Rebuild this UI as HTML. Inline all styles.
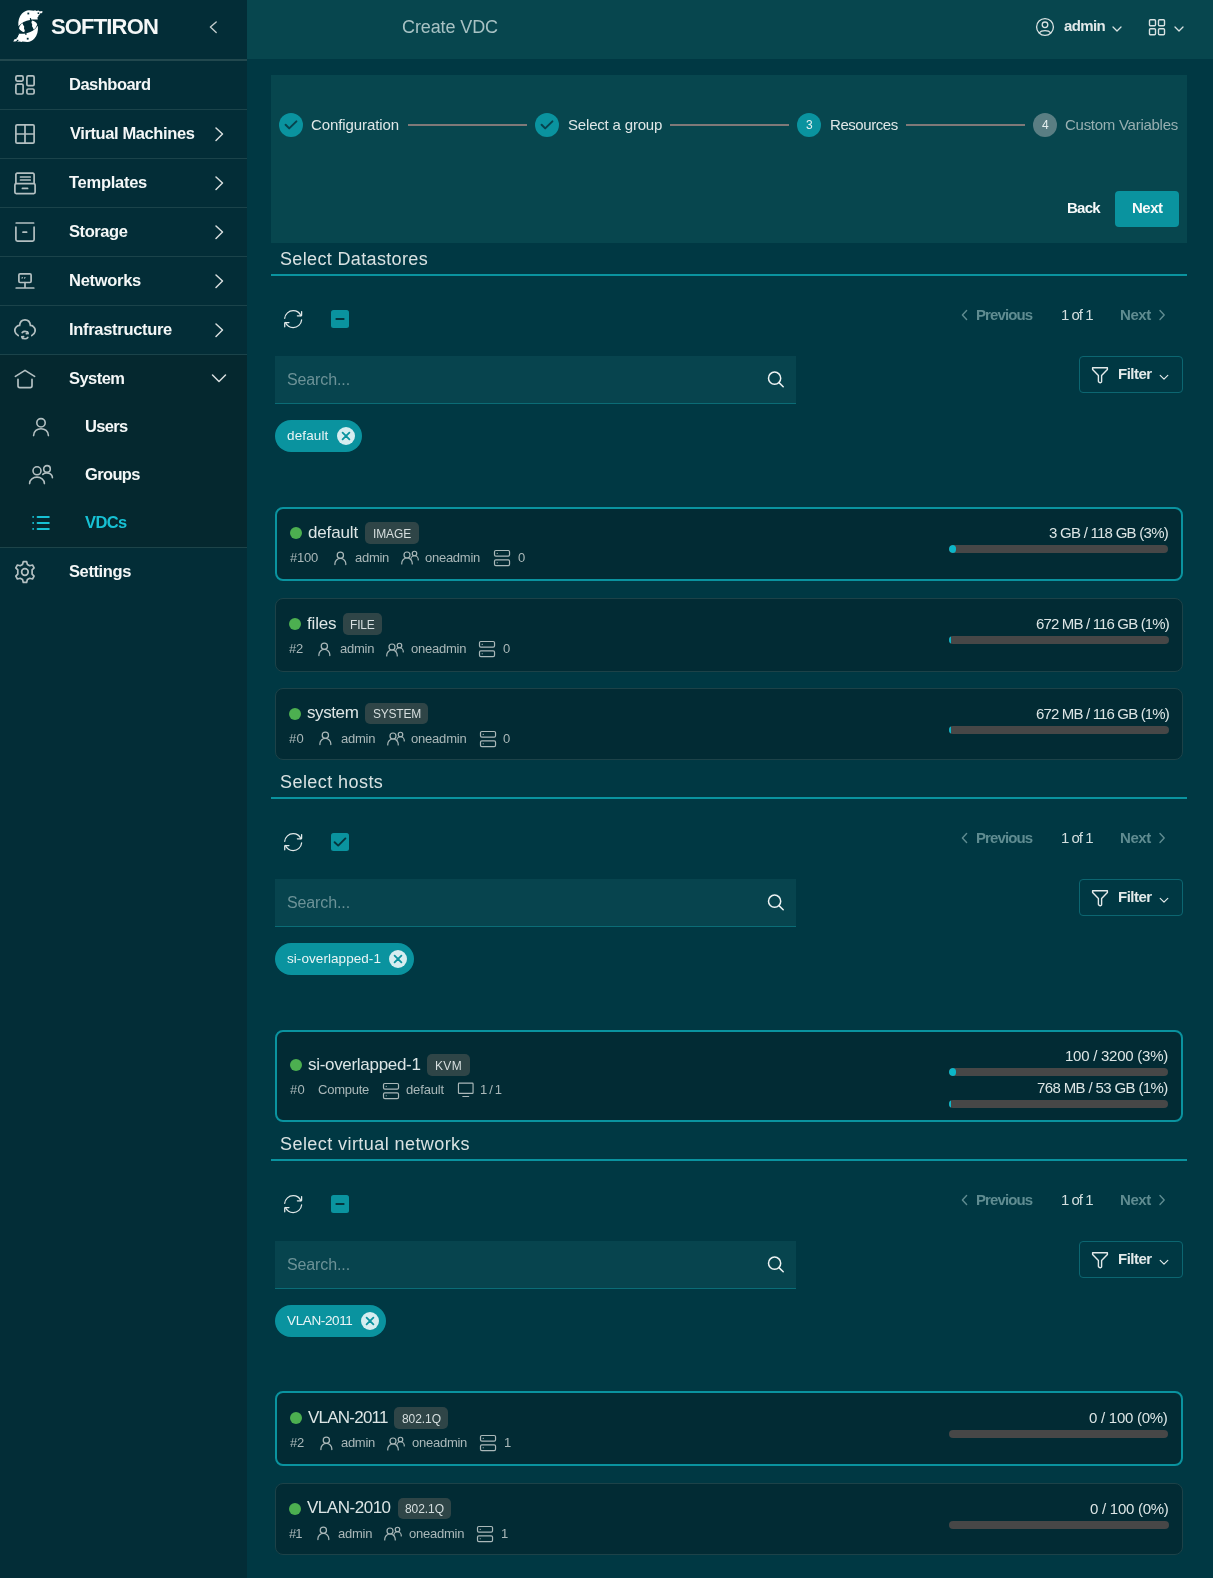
<!DOCTYPE html>
<html><head><meta charset="utf-8"><title>Create VDC</title>
<style>
html,body{margin:0;padding:0;}
body{width:1213px;height:1578px;overflow:hidden;position:relative;background:#003843;font-family:"Liberation Sans", sans-serif;}
svg{display:block;}
</style></head><body>
<div style="position:absolute;left:0px;top:0px;width:247px;height:1578px;background:#032d37;"></div>
<div style="position:absolute;left:247px;top:0px;width:966px;height:59px;background:#07464e;"></div>
<div style="position:absolute;left:0px;top:59px;width:247px;height:2px;background:#22484e;"></div>
<div style="position:absolute;left:0px;top:109px;width:247px;height:1px;background:#1b434a;"></div>
<div style="position:absolute;left:0px;top:158px;width:247px;height:1px;background:#1b434a;"></div>
<div style="position:absolute;left:0px;top:207px;width:247px;height:1px;background:#1b434a;"></div>
<div style="position:absolute;left:0px;top:256px;width:247px;height:1px;background:#1b434a;"></div>
<div style="position:absolute;left:0px;top:305px;width:247px;height:1px;background:#1b434a;"></div>
<div style="position:absolute;left:0px;top:354px;width:247px;height:1px;background:#1b434a;"></div>
<div style="position:absolute;left:0px;top:355px;width:247px;height:192px;background:#05282f;"></div>
<div style="position:absolute;left:0px;top:547px;width:247px;height:1px;background:#1d4449;"></div>
<div style="position:absolute;left:271px;top:75px;width:916px;height:168px;background:#07464e;"></div>
<svg style="position:absolute;left:8px;top:6px;" width="40" height="40" viewBox="8 6 40 40" fill="none">
<path d="M18.4 26.3 C17.9 21 19.2 16.4 22 13.6 C24 11.6 26.4 10.4 29 10.3 L34 10.7 L35 10.3 L36.6 10.9 L38.4 10.5 L40 11.4 L41.2 11 L42.9 11.7 L41.6 13.3 L40.2 13.2 L39.4 15 L38.6 15.2 L38.2 16.8 L37.4 17.6 L37.8 19.4 C35 19.4 32 19.4 31.2 19.6 L31 18 L29.8 18.2 L30 19.9 C25.6 20.6 21.2 22.6 18.4 26.3 Z" fill="#fff"/>
<path d="M37.9 25.8 C38.4 31 37.2 35.6 34.4 38.4 C32.4 40.4 30 41.8 27.4 42 L22.4 41.6 L21.4 42 L19.8 41.4 L18 41.8 L16.4 41 L15.2 41.4 L13.2 41.6 L14.8 39 L16.2 39.2 L17 37.4 L17.8 37.2 L18.2 35.6 L19 34.8 L18.6 33.8 C21.4 33.8 24.4 33.6 25.2 33.4 L25.4 35 L26.6 34.8 L26.4 33.2 C30.8 32.4 35.2 29.8 37.9 25.8 Z" fill="#fff"/>
<path d="M19 28.2 C19.6 25.8 21 24 22.5 23.2 L23.2 25 L24.2 26.6 L24 28.4 L24.8 30.4 L24.2 32.2 C22 31.6 20 30.4 19 28.2 Z" fill="#fff"/>
<path d="M37.2 24.2 C36.6 26.6 35.2 28.6 33.6 29.6 L32.8 27.6 L32 26.2 L32.2 24.4 L31.4 22.4 L32 20.6 C34.2 21 36.2 22.2 37.2 24.2 Z" fill="#fff"/>
<rect x="27.4" y="12.6" width="1.8" height="1.8" fill="#032d37"/><rect x="37.6" y="12.4" width="1.6" height="1.6" fill="#032d37"/>
<rect x="26.8" y="37.8" width="1.8" height="1.8" fill="#032d37"/><rect x="16.8" y="39.8" width="1.6" height="1.6" fill="#032d37"/>
</svg>
<div style="position:absolute;left:50.50px;top:16.38px;font-size:22px;line-height:22px;font-weight:700;color:#f4f7f7;letter-spacing:-0.834px;white-space:pre;will-change:transform;">SOFTIRON</div>
<svg style="position:absolute;left:205px;top:18px;" width="16" height="18" viewBox="0 0 16 18" fill="none"><path d="M11.2 4 L5.4 9 L11.2 14.4" stroke="#c3cccc" stroke-width="1.4" stroke-linecap="round" stroke-linejoin="round"/></svg>
<div style="position:absolute;left:69.30px;top:76.23px;font-size:16.5px;line-height:16.5px;font-weight:700;color:#f4f7f7;letter-spacing:-0.510px;white-space:pre;will-change:transform;">Dashboard</div>
<div style="position:absolute;left:69.50px;top:125.23px;font-size:16.5px;line-height:16.5px;font-weight:700;color:#f4f7f7;letter-spacing:-0.396px;white-space:pre;will-change:transform;">Virtual Machines</div>
<div style="position:absolute;left:69.30px;top:174.23px;font-size:16.5px;line-height:16.5px;font-weight:700;color:#f4f7f7;letter-spacing:-0.266px;white-space:pre;will-change:transform;">Templates</div>
<div style="position:absolute;left:69.20px;top:223.13px;font-size:16.5px;line-height:16.5px;font-weight:700;color:#f4f7f7;letter-spacing:-0.420px;white-space:pre;will-change:transform;">Storage</div>
<div style="position:absolute;left:69.20px;top:271.83px;font-size:16.5px;line-height:16.5px;font-weight:700;color:#f4f7f7;letter-spacing:-0.285px;white-space:pre;will-change:transform;">Networks</div>
<div style="position:absolute;left:69.20px;top:321.03px;font-size:16.5px;line-height:16.5px;font-weight:700;color:#f4f7f7;letter-spacing:-0.306px;white-space:pre;will-change:transform;">Infrastructure</div>
<div style="position:absolute;left:69.20px;top:369.73px;font-size:16.5px;line-height:16.5px;font-weight:700;color:#f4f7f7;letter-spacing:-0.534px;white-space:pre;will-change:transform;">System</div>
<div style="position:absolute;left:85.30px;top:417.73px;font-size:16.5px;line-height:16.5px;font-weight:700;color:#f4f7f7;letter-spacing:-0.675px;white-space:pre;will-change:transform;">Users</div>
<div style="position:absolute;left:85.30px;top:466.13px;font-size:16.5px;line-height:16.5px;font-weight:700;color:#f4f7f7;letter-spacing:-0.645px;white-space:pre;will-change:transform;">Groups</div>
<div style="position:absolute;left:85.30px;top:514.03px;font-size:16.5px;line-height:16.5px;font-weight:700;color:#17c1d4;letter-spacing:-0.629px;white-space:pre;will-change:transform;">VDCs</div>
<div style="position:absolute;left:69.20px;top:563.03px;font-size:16.5px;line-height:16.5px;font-weight:700;color:#f4f7f7;letter-spacing:-0.387px;white-space:pre;will-change:transform;">Settings</div>
<svg style="position:absolute;left:211px;top:126px;" width="16" height="16" viewBox="0 0 16 16" fill="none"><path d="M5 2 L11.5 8 L5 14.5" stroke="#d8dede" stroke-width="1.5" stroke-linecap="round" stroke-linejoin="round"/></svg>
<svg style="position:absolute;left:211px;top:175px;" width="16" height="16" viewBox="0 0 16 16" fill="none"><path d="M5 2 L11.5 8 L5 14.5" stroke="#d8dede" stroke-width="1.5" stroke-linecap="round" stroke-linejoin="round"/></svg>
<svg style="position:absolute;left:211px;top:224px;" width="16" height="16" viewBox="0 0 16 16" fill="none"><path d="M5 2 L11.5 8 L5 14.5" stroke="#d8dede" stroke-width="1.5" stroke-linecap="round" stroke-linejoin="round"/></svg>
<svg style="position:absolute;left:211px;top:273px;" width="16" height="16" viewBox="0 0 16 16" fill="none"><path d="M5 2 L11.5 8 L5 14.5" stroke="#d8dede" stroke-width="1.5" stroke-linecap="round" stroke-linejoin="round"/></svg>
<svg style="position:absolute;left:211px;top:322px;" width="16" height="16" viewBox="0 0 16 16" fill="none"><path d="M5 2 L11.5 8 L5 14.5" stroke="#d8dede" stroke-width="1.5" stroke-linecap="round" stroke-linejoin="round"/></svg>
<svg style="position:absolute;left:210px;top:370px;" width="18" height="16" viewBox="0 0 18 16" fill="none"><path d="M2.5 5 L9 11.5 L15.5 5" stroke="#d8dede" stroke-width="1.5" stroke-linecap="round" stroke-linejoin="round"/></svg>
<svg style="position:absolute;left:12px;top:72px;" width="26" height="26" viewBox="0 0 26 26" fill="none"><g stroke="#b4c0c2" stroke-width="1.7">
<rect x="3.9" y="3.9" width="7.2" height="5.2" rx="1.3"/><rect x="3.9" y="12.2" width="7.2" height="9.8" rx="1.3"/>
<rect x="14.9" y="3.9" width="7.2" height="9.8" rx="1.3"/><rect x="14.9" y="17" width="7.2" height="5" rx="1.3"/></g></svg>
<svg style="position:absolute;left:12px;top:121px;" width="26" height="26" viewBox="0 0 26 26" fill="none"><g stroke="#b4c0c2" stroke-width="1.7"><rect x="3.9" y="3.9" width="18.2" height="18.2" rx="1.2"/>
<path d="M13 4 V22 M4 13 H22"/></g></svg>
<svg style="position:absolute;left:12px;top:170px;" width="26" height="26" viewBox="0 0 26 26" fill="none"><g stroke="#b4c0c2" stroke-width="1.7" stroke-linecap="round">
<path d="M3.9 13 V4.4 a1.3 1.3 0 0 1 1.3-1.3 H20.8 a1.3 1.3 0 0 1 1.3 1.3 V13"/>
<rect x="2.9" y="13.6" width="20.2" height="10" rx="1.3"/>
<path d="M8.5 7 H18.2 M8.5 10 H18.2 M10.4 18.4 H15.6"/></g></svg>
<svg style="position:absolute;left:12px;top:219px;" width="26" height="26" viewBox="0 0 26 26" fill="none"><g stroke="#b4c0c2" stroke-width="1.7" stroke-linecap="round">
<path d="M4.2 4 H21.6"/><path d="M3.9 8.2 V20.6 a1.6 1.6 0 0 0 1.6 1.6 H20.5 a1.6 1.6 0 0 0 1.6-1.6 V8.2"/>
<path d="M11 13.2 H14.6"/></g></svg>
<svg style="position:absolute;left:12px;top:268px;" width="26" height="26" viewBox="0 0 26 26" fill="none"><g stroke="#b4c0c2" stroke-width="1.7" stroke-linecap="round">
<rect x="6.9" y="5.9" width="12.2" height="8.6" rx="1.2"/><path d="M13 14.6 V19.6 M4.2 20 H21.8"/>
<path d="M10 10 L10.4 9.6 M12.6 10 L13 9.6" stroke-width="1.2"/></g></svg>
<svg style="position:absolute;left:12px;top:317px;" width="26" height="26" viewBox="0 0 26 26" fill="none"><g stroke="#b4c0c2" stroke-width="1.7" stroke-linecap="round">
<path d="M6.2 18.6 C2.6 16.8 1.6 12 4.6 9.6 C5.6 8.8 6.8 8.4 7.6 8.4 C8 4.4 10.6 2.8 13 2.8 C15.6 2.8 18 4.4 18.4 8.4 C19.4 8.4 20.6 8.8 21.4 9.6 C24.4 12 23.4 16.8 19.8 18.6"/>
<path d="M10.2 15.6 C11.6 14 14.6 14 15.8 16"/><path d="M15.8 20.4 C14.4 22.2 11.6 22.2 10.2 20.2"/>
<path d="M15.6 14.6 L16.2 16.6 L14.2 16.8 M10.4 21.6 L9.8 19.6 L11.8 19.4" stroke-width="1.4"/></g></svg>
<svg style="position:absolute;left:12px;top:366px;" width="26" height="26" viewBox="0 0 26 26" fill="none"><g stroke="#b4c0c2" stroke-width="1.7" stroke-linecap="round" stroke-linejoin="round">
<path d="M3.4 10.4 L13 4.4 L22.6 10.4"/><path d="M6 13.4 V19.8 a1.8 1.8 0 0 0 1.8 1.8 H18.2 a1.8 1.8 0 0 0 1.8-1.8 V13.4"/></g></svg>
<svg style="position:absolute;left:28px;top:414px;" width="26" height="26" viewBox="0 0 26 26" fill="none"><g stroke="#b4c0c2" stroke-width="1.6" stroke-linecap="round">
<circle cx="13" cy="8.8" r="4.2"/><path d="M5.6 21.6 C5.6 12.4 20.4 12.4 20.4 21.6"/></g></svg>
<svg style="position:absolute;left:28px;top:462px;" width="26" height="26" viewBox="0 0 26 26" fill="none"><g stroke="#b4c0c2" stroke-width="1.6" stroke-linecap="round">
<circle cx="9" cy="8.8" r="4"/><circle cx="19" cy="6.9" r="3.3"/>
<path d="M1.6 21.6 C1.6 13 16.4 13 16.4 21.6"/><path d="M14.8 12.4 C17.8 9.6 24.4 11 24.4 15.8"/></g></svg>
<svg style="position:absolute;left:28px;top:510px;" width="26" height="26" viewBox="0 0 26 26" fill="none"><g stroke="#17c1d4" stroke-width="2" stroke-linecap="round">
<path d="M9.6 6.9 H20.8 M9.6 13 H20.8 M9.6 18.9 H20.8"/><path d="M5.1 6.9 H5.2 M5.1 13 H5.2 M5.1 18.9 H5.2" stroke-width="1.8"/></g></svg>
<svg style="position:absolute;left:12px;top:559px;" width="26" height="26" viewBox="0 0 26 26" fill="none"><g stroke="#b4c0c2" stroke-width="1.7" stroke-linejoin="round">
<circle cx="12.9" cy="13" r="3.3"/>
<path d="M11.3 2.6 H14.6 L15.4 5.4 L17.7 6.7 L20.5 6 L22.1 8.8 L20.1 10.9 V15.1 L22.1 17.2 L20.5 20 L17.7 19.3 L15.4 20.6 L14.6 23.4 H11.3 L10.5 20.6 L8.2 19.3 L5.4 20 L3.8 17.2 L5.8 15.1 V10.9 L3.8 8.8 L5.4 6 L8.2 6.7 L10.5 5.4 Z"/></g></svg>
<div style="position:absolute;left:401.70px;top:17.76px;font-size:18px;line-height:18px;font-weight:400;color:#a8c2c4;letter-spacing:-0.103px;white-space:pre;will-change:transform;">Create VDC</div>
<svg style="position:absolute;left:1034px;top:16px;" width="22" height="22" viewBox="0 0 22 22" fill="none"><g stroke="#d9e2e2" stroke-width="1.3"><circle cx="11" cy="11" r="8.4"/><circle cx="11" cy="8.8" r="2.8"/>
<path d="M5.2 16.8 C7.6 14 14.4 14 16.8 16.8"/></g></svg>
<div style="position:absolute;left:1063.50px;top:18.30px;font-size:15px;line-height:15px;font-weight:700;color:#e1e9e9;letter-spacing:-0.637px;white-space:pre;will-change:transform;">admin</div>
<svg style="position:absolute;left:1110px;top:22px;" width="14" height="12" viewBox="0 0 14 12" fill="none"><path d="M3 5 L7 9 L11 5" stroke="#d9e2e2" stroke-width="1.3" stroke-linecap="round" stroke-linejoin="round"/></svg>
<svg style="position:absolute;left:1146px;top:17px;" width="22" height="22" viewBox="0 0 22 22" fill="none"><g stroke="#d9e2e2" stroke-width="1.4"><rect x="3.5" y="2.8" width="6" height="6" rx="1"/><rect x="12.5" y="2.8" width="6" height="6" rx="1"/>
<rect x="3.5" y="11.8" width="6" height="6" rx="1"/><rect x="12.5" y="11.8" width="6" height="6" rx="1"/></g></svg>
<svg style="position:absolute;left:1172px;top:22px;" width="14" height="12" viewBox="0 0 14 12" fill="none"><path d="M3 5 L7 9 L11 5" stroke="#d9e2e2" stroke-width="1.3" stroke-linecap="round" stroke-linejoin="round"/></svg>
<svg style="position:absolute;left:279px;top:113px;" width="24" height="24" viewBox="0 0 24 24" fill="none"><circle cx="12" cy="12" r="12" fill="#0a939f"/><path d="M6.6 11.8 L10.2 15.4 L17.4 8.4" stroke="#07434d" stroke-width="2" stroke-linecap="round" stroke-linejoin="round"/></svg>
<svg style="position:absolute;left:535px;top:113px;" width="24" height="24" viewBox="0 0 24 24" fill="none"><circle cx="12" cy="12" r="12" fill="#0a939f"/><path d="M6.6 11.8 L10.2 15.4 L17.4 8.4" stroke="#07434d" stroke-width="2" stroke-linecap="round" stroke-linejoin="round"/></svg>
<svg style="position:absolute;left:797px;top:113px;" width="24" height="24" viewBox="0 0 24 24" fill="none"><circle cx="12" cy="12" r="12" fill="#0a939f"/></svg>
<svg style="position:absolute;left:1033px;top:113px;" width="24" height="24" viewBox="0 0 24 24" fill="none"><circle cx="12" cy="12" r="12" fill="#5a7e83"/></svg>
<div style="position:absolute;left:805.60px;top:119.34px;font-size:12px;line-height:12px;font-weight:400;color:#e6f0f0;letter-spacing:0.000px;white-space:pre;will-change:transform;">3</div>
<div style="position:absolute;left:1041.60px;top:119.34px;font-size:12px;line-height:12px;font-weight:400;color:#e6f0f0;letter-spacing:0.000px;white-space:pre;will-change:transform;">4</div>
<div style="position:absolute;left:311.40px;top:116.70px;font-size:15px;line-height:15px;font-weight:400;color:#dfe7e7;letter-spacing:-0.095px;white-space:pre;will-change:transform;">Configuration</div>
<div style="position:absolute;left:567.50px;top:116.70px;font-size:15px;line-height:15px;font-weight:400;color:#dfe7e7;letter-spacing:-0.181px;white-space:pre;will-change:transform;">Select a group</div>
<div style="position:absolute;left:829.50px;top:116.70px;font-size:15px;line-height:15px;font-weight:400;color:#dfe7e7;letter-spacing:-0.445px;white-space:pre;will-change:transform;">Resources</div>
<div style="position:absolute;left:1065.20px;top:116.70px;font-size:15px;line-height:15px;font-weight:400;color:#98afb1;letter-spacing:-0.268px;white-space:pre;will-change:transform;">Custom Variables</div>
<div style="position:absolute;left:408px;top:124px;width:119px;height:2px;background:#7f7978;"></div>
<div style="position:absolute;left:670px;top:124px;width:119px;height:2px;background:#7f7978;"></div>
<div style="position:absolute;left:906px;top:124px;width:119px;height:2px;background:#7f7978;"></div>
<div style="position:absolute;left:1066.80px;top:200.00px;font-size:15px;line-height:15px;font-weight:700;color:#f6f9f9;letter-spacing:-0.715px;white-space:pre;will-change:transform;">Back</div>
<div style="position:absolute;left:1115px;top:191px;width:64px;height:36px;background:#0a939f;border-radius:4px;"></div>
<div style="position:absolute;left:1132.00px;top:200.00px;font-size:15px;line-height:15px;font-weight:700;color:#f6f9f9;letter-spacing:-0.479px;white-space:pre;will-change:transform;">Next</div>
<div style="position:absolute;left:280.30px;top:249.76px;font-size:18px;line-height:18px;font-weight:400;color:#d9e2e2;letter-spacing:0.348px;white-space:pre;will-change:transform;">Select Datastores</div>
<div style="position:absolute;left:271px;top:274px;width:916px;height:2px;background:#0a939f;"></div>
<svg style="position:absolute;left:282.7px;top:308.64px;" width="20.3" height="20.3" viewBox="0 0 24 24" fill="none"><g stroke="#e2e9e9" stroke-width="1.5" stroke-linecap="round" stroke-linejoin="round"><path d="M21.1679 8C19.6247 4.46819 16.1006 2 11.9999 2C6.81459 2 2.55104 5.94668 2.04932 11"/><path d="M17 8H21.4C21.7314 8 22 7.73137 22 7.4V3"/><path d="M2.88146 16C4.42458 19.5318 7.94874 22 12.0494 22C17.2347 22 21.4983 18.0533 22 13"/><path d="M7.04932 16H2.64932C2.31795 16 2.04932 16.2686 2.04932 16.6V21"/></g></svg>
<svg style="position:absolute;left:331px;top:310px;" width="18" height="18" viewBox="0 0 18 18" fill="none"><rect x="0" y="0" width="18" height="18" rx="2.5" fill="#0a939f"/><path d="M4.6 9 H13.4" stroke="#05343d" stroke-width="2" stroke-linecap="butt"/></svg>
<svg style="position:absolute;left:958px;top:307px;" width="12" height="16" viewBox="0 0 12 16" fill="none"><path d="M8.6 3.6 L4.4 8 L8.6 12.4" stroke="#5f8c91" stroke-width="1.4" stroke-linecap="round" stroke-linejoin="round"/></svg>
<div style="position:absolute;left:975.80px;top:307.40px;font-size:15px;line-height:15px;font-weight:700;color:#5f8c91;letter-spacing:-0.897px;white-space:pre;will-change:transform;">Previous</div>
<div style="position:absolute;left:1060.70px;top:307.40px;font-size:15px;line-height:15px;font-weight:400;color:#d3dfdf;letter-spacing:-1.005px;white-space:pre;will-change:transform;">1 of 1</div>
<div style="position:absolute;left:1119.60px;top:307.40px;font-size:15px;line-height:15px;font-weight:700;color:#5f8c91;letter-spacing:-0.404px;white-space:pre;will-change:transform;">Next</div>
<svg style="position:absolute;left:1156px;top:307px;" width="12" height="16" viewBox="0 0 12 16" fill="none"><path d="M4 3.6 L8.2 8 L4 12.4" stroke="#5f8c91" stroke-width="1.4" stroke-linecap="round" stroke-linejoin="round"/></svg>
<div style="position:absolute;left:275px;top:356px;width:521px;height:47px;background:#07444e;border-bottom:1px solid #0b6c76;box-sizing:border-box;height:48px;"></div>
<div style="position:absolute;left:287.30px;top:371.96px;font-size:16px;line-height:16px;font-weight:400;color:#6c9297;letter-spacing:-0.115px;white-space:pre;will-change:transform;">Search...</div>
<svg style="position:absolute;left:765px;top:369px;" width="20" height="20" viewBox="0 0 20 20" fill="none"><g stroke="#eef3f3" stroke-width="1.5" stroke-linecap="round"><circle cx="9.6" cy="9.2" r="6.1"/><path d="M14 13.6 L18.2 17.8"/></g></svg>
<div style="position:absolute;left:1079px;top:356px;width:104px;height:37px;background:transparent;border:1px solid #0c6671;border-radius:4px;box-sizing:border-box;"></div>
<svg style="position:absolute;left:1090px;top:366px;" width="20" height="18" viewBox="0 0 20 18" fill="none"><path d="M2.6 1.8 H17.4 V3.4 L11.6 9.6 V15.4 C11.6 16.4 10.6 17 9.8 16.6 L9 16.2 C8.6 16 8.4 15.6 8.4 15.2 V9.6 L2.6 3.4 Z" stroke="#e3eaea" stroke-width="1.4" stroke-linejoin="round"/></svg>
<div style="position:absolute;left:1118.00px;top:366.40px;font-size:15px;line-height:15px;font-weight:700;color:#e3eaea;letter-spacing:-0.515px;white-space:pre;will-change:transform;">Filter</div>
<svg style="position:absolute;left:1157px;top:372px;" width="14" height="10" viewBox="0 0 14 10" fill="none"><path d="M3.2 3.4 L7 7.2 L10.8 3.4" stroke="#e3eaea" stroke-width="1.2" stroke-linecap="round" stroke-linejoin="round"/></svg>
<div style="position:absolute;left:275px;top:420px;width:86.69999999999999px;height:32px;background:#0a939f;border-radius:16px;"></div>
<div style="position:absolute;left:287.30px;top:428.57px;font-size:13.5px;line-height:13.5px;font-weight:400;color:#eaf5f6;letter-spacing:0.136px;white-space:pre;will-change:transform;">default</div>
<svg style="position:absolute;left:336.7px;top:427px;" width="18" height="18" viewBox="0 0 18 18" fill="none"><circle cx="9" cy="9" r="9" fill="#d6edf0"/><path d="M5.6 5.6 L12.4 12.4 M12.4 5.6 L5.6 12.4" stroke="#0a939f" stroke-width="1.8" stroke-linecap="round"/></svg>
<div style="position:absolute;left:275px;top:507px;width:908px;height:74px;background:#022b34;border:2px solid #0a939f;border-radius:8px;box-sizing:border-box;"></div>
<svg style="position:absolute;left:290px;top:527px;" width="12" height="12" viewBox="0 0 12 12" fill="none"><circle cx="6" cy="6" r="6" fill="#4caf50"/></svg>
<div style="position:absolute;left:308.30px;top:523.91px;font-size:17px;line-height:17px;font-weight:400;color:#dce5e5;letter-spacing:-0.150px;white-space:pre;will-change:transform;">default</div>
<div style="position:absolute;left:365.3px;top:522.3px;width:53.39999999999998px;height:21.300000000000068px;background:#2f4547;border-radius:5px;"></div>
<div style="position:absolute;left:372.80px;top:528.04px;font-size:12px;line-height:12px;font-weight:400;color:#d7dfdf;letter-spacing:-0.134px;white-space:pre;will-change:transform;">IMAGE</div>
<div style="position:absolute;left:290.00px;top:550.90px;font-size:13px;line-height:13px;font-weight:400;color:#aab8b9;letter-spacing:-0.255px;white-space:pre;will-change:transform;">#100</div>
<svg style="position:absolute;left:330.58px;top:548.66px;" width="18.72" height="18.72" viewBox="0 0 24 24" fill="none"><g stroke="#aab8b9" stroke-width="1.6" stroke-linecap="round" stroke-linejoin="round"><path d="M5 20V19C5 15.134 8.13401 12 12 12C15.866 12 19 15.134 19 19V20"/><circle cx="12" cy="8" r="4"/></g></svg>
<div style="position:absolute;left:354.60px;top:550.90px;font-size:13px;line-height:13px;font-weight:400;color:#aab8b9;letter-spacing:-0.284px;white-space:pre;will-change:transform;">admin</div>
<svg style="position:absolute;left:400.71px;top:549.31px;" width="18.0" height="18.0" viewBox="0 0 24 24" fill="none"><g stroke="#aab8b9" stroke-width="1.6" stroke-linecap="round" stroke-linejoin="round"><path d="M1 20V19C1 15.134 4.13401 12 8 12C11.866 12 15 15.134 15 19V20"/><path d="M13 14C13 11.2386 15.2386 9 18 9C20.7614 9 23 11.2386 23 14V14.5"/><circle cx="8" cy="8" r="4"/><circle cx="18" cy="6" r="3"/></g></svg>
<div style="position:absolute;left:425.40px;top:550.90px;font-size:13px;line-height:13px;font-weight:400;color:#aab8b9;letter-spacing:-0.264px;white-space:pre;will-change:transform;">oneadmin</div>
<svg style="position:absolute;left:491.82px;top:548.12px;" width="20.06" height="20.06" viewBox="0 0 24 24" fill="none"><g stroke="#aab8b9" stroke-width="1.45" stroke-linecap="round" stroke-linejoin="round"><rect x="3" y="3" width="18" height="6.7" rx="1.6"/><rect x="3" y="14.3" width="18" height="6.7" rx="1.6"/><path d="M6.2 6.35 H6.3 M6.2 17.65 H6.3"/></g></svg>
<div style="position:absolute;left:517.50px;top:550.90px;font-size:13px;line-height:13px;font-weight:400;color:#aab8b9;letter-spacing:0.266px;white-space:pre;will-change:transform;">0</div>
<div style="position:absolute;left:1048.70px;top:525.30px;font-size:15px;line-height:15px;font-weight:400;color:#dce5e5;letter-spacing:-0.738px;white-space:pre;will-change:transform;">3 GB / 118 GB (3%)</div>
<div style="position:absolute;left:949px;top:545px;width:219.00px;height:8px;background:#474747;border-radius:4px;overflow:hidden;"><div style="width:6.57px;height:8px;background:#0cb6c8;border-radius:4px;"></div></div>
<div style="position:absolute;left:275px;top:598px;width:908px;height:74px;background:#022b34;border:1px solid #1d4248;border-radius:8px;box-sizing:border-box;"></div>
<svg style="position:absolute;left:289px;top:618px;" width="12" height="12" viewBox="0 0 12 12" fill="none"><circle cx="6" cy="6" r="6" fill="#4caf50"/></svg>
<div style="position:absolute;left:306.80px;top:614.51px;font-size:17px;line-height:17px;font-weight:400;color:#dce5e5;letter-spacing:-0.167px;white-space:pre;will-change:transform;">files</div>
<div style="position:absolute;left:343.2px;top:613.3px;width:38.60000000000002px;height:21.40000000000009px;background:#2f4547;border-radius:5px;"></div>
<div style="position:absolute;left:350.20px;top:618.84px;font-size:12px;line-height:12px;font-weight:400;color:#d7dfdf;letter-spacing:-0.186px;white-space:pre;will-change:transform;">FILE</div>
<div style="position:absolute;left:289.00px;top:642.20px;font-size:13px;line-height:13px;font-weight:400;color:#aab8b9;letter-spacing:-0.134px;white-space:pre;will-change:transform;">#2</div>
<svg style="position:absolute;left:315.29px;top:639.97px;" width="18.72" height="18.72" viewBox="0 0 24 24" fill="none"><g stroke="#aab8b9" stroke-width="1.6" stroke-linecap="round" stroke-linejoin="round"><path d="M5 20V19C5 15.134 8.13401 12 12 12C15.866 12 19 15.134 19 19V20"/><circle cx="12" cy="8" r="4"/></g></svg>
<div style="position:absolute;left:340.00px;top:642.20px;font-size:13px;line-height:13px;font-weight:400;color:#aab8b9;letter-spacing:-0.224px;white-space:pre;will-change:transform;">admin</div>
<svg style="position:absolute;left:385.91px;top:640.61px;" width="18.0" height="18.0" viewBox="0 0 24 24" fill="none"><g stroke="#aab8b9" stroke-width="1.6" stroke-linecap="round" stroke-linejoin="round"><path d="M1 20V19C1 15.134 4.13401 12 8 12C11.866 12 15 15.134 15 19V20"/><path d="M13 14C13 11.2386 15.2386 9 18 9C20.7614 9 23 11.2386 23 14V14.5"/><circle cx="8" cy="8" r="4"/><circle cx="18" cy="6" r="3"/></g></svg>
<div style="position:absolute;left:410.80px;top:642.20px;font-size:13px;line-height:13px;font-weight:400;color:#aab8b9;letter-spacing:-0.239px;white-space:pre;will-change:transform;">oneadmin</div>
<svg style="position:absolute;left:477.02px;top:639.42px;" width="20.06" height="20.06" viewBox="0 0 24 24" fill="none"><g stroke="#aab8b9" stroke-width="1.45" stroke-linecap="round" stroke-linejoin="round"><rect x="3" y="3" width="18" height="6.7" rx="1.6"/><rect x="3" y="14.3" width="18" height="6.7" rx="1.6"/><path d="M6.2 6.35 H6.3 M6.2 17.65 H6.3"/></g></svg>
<div style="position:absolute;left:502.50px;top:642.20px;font-size:13px;line-height:13px;font-weight:400;color:#aab8b9;letter-spacing:0.266px;white-space:pre;will-change:transform;">0</div>
<div style="position:absolute;left:1035.60px;top:616.30px;font-size:15px;line-height:15px;font-weight:400;color:#dce5e5;letter-spacing:-0.840px;white-space:pre;will-change:transform;">672 MB / 116 GB (1%)</div>
<div style="position:absolute;left:949px;top:636px;width:219.60px;height:8px;background:#474747;border-radius:4px;overflow:hidden;"><div style="width:2.20px;height:8px;background:#0cb6c8;border-radius:4px;"></div></div>
<div style="position:absolute;left:275px;top:688px;width:908px;height:72px;background:#022b34;border:1px solid #1d4248;border-radius:8px;box-sizing:border-box;"></div>
<svg style="position:absolute;left:289px;top:708px;" width="12" height="12" viewBox="0 0 12 12" fill="none"><circle cx="6" cy="6" r="6" fill="#4caf50"/></svg>
<div style="position:absolute;left:306.80px;top:704.11px;font-size:17px;line-height:17px;font-weight:400;color:#dce5e5;letter-spacing:-0.407px;white-space:pre;will-change:transform;">system</div>
<div style="position:absolute;left:365.3px;top:703.3px;width:62.599999999999966px;height:21.0px;background:#2f4547;border-radius:5px;"></div>
<div style="position:absolute;left:372.50px;top:708.44px;font-size:12px;line-height:12px;font-weight:400;color:#d7dfdf;letter-spacing:-0.224px;white-space:pre;will-change:transform;">SYSTEM</div>
<div style="position:absolute;left:289.00px;top:731.50px;font-size:13px;line-height:13px;font-weight:400;color:#aab8b9;letter-spacing:0.266px;white-space:pre;will-change:transform;">#0</div>
<svg style="position:absolute;left:316.38px;top:729.26px;" width="18.72" height="18.72" viewBox="0 0 24 24" fill="none"><g stroke="#aab8b9" stroke-width="1.6" stroke-linecap="round" stroke-linejoin="round"><path d="M5 20V19C5 15.134 8.13401 12 12 12C15.866 12 19 15.134 19 19V20"/><circle cx="12" cy="8" r="4"/></g></svg>
<div style="position:absolute;left:340.70px;top:731.50px;font-size:13px;line-height:13px;font-weight:400;color:#aab8b9;letter-spacing:-0.224px;white-space:pre;will-change:transform;">admin</div>
<svg style="position:absolute;left:387.01px;top:729.91px;" width="18.0" height="18.0" viewBox="0 0 24 24" fill="none"><g stroke="#aab8b9" stroke-width="1.6" stroke-linecap="round" stroke-linejoin="round"><path d="M1 20V19C1 15.134 4.13401 12 8 12C11.866 12 15 15.134 15 19V20"/><path d="M13 14C13 11.2386 15.2386 9 18 9C20.7614 9 23 11.2386 23 14V14.5"/><circle cx="8" cy="8" r="4"/><circle cx="18" cy="6" r="3"/></g></svg>
<div style="position:absolute;left:411.40px;top:731.50px;font-size:13px;line-height:13px;font-weight:400;color:#aab8b9;letter-spacing:-0.201px;white-space:pre;will-change:transform;">oneadmin</div>
<svg style="position:absolute;left:478.12px;top:728.72px;" width="20.06" height="20.06" viewBox="0 0 24 24" fill="none"><g stroke="#aab8b9" stroke-width="1.45" stroke-linecap="round" stroke-linejoin="round"><rect x="3" y="3" width="18" height="6.7" rx="1.6"/><rect x="3" y="14.3" width="18" height="6.7" rx="1.6"/><path d="M6.2 6.35 H6.3 M6.2 17.65 H6.3"/></g></svg>
<div style="position:absolute;left:503.40px;top:731.50px;font-size:13px;line-height:13px;font-weight:400;color:#aab8b9;letter-spacing:0.266px;white-space:pre;will-change:transform;">0</div>
<div style="position:absolute;left:1035.60px;top:706.30px;font-size:15px;line-height:15px;font-weight:400;color:#dce5e5;letter-spacing:-0.840px;white-space:pre;will-change:transform;">672 MB / 116 GB (1%)</div>
<div style="position:absolute;left:949px;top:726px;width:219.60px;height:8px;background:#474747;border-radius:4px;overflow:hidden;"><div style="width:2.20px;height:8px;background:#0cb6c8;border-radius:4px;"></div></div>
<div style="position:absolute;left:280.30px;top:772.76px;font-size:18px;line-height:18px;font-weight:400;color:#d9e2e2;letter-spacing:0.436px;white-space:pre;will-change:transform;">Select hosts</div>
<div style="position:absolute;left:271px;top:797px;width:916px;height:2px;background:#0a939f;"></div>
<svg style="position:absolute;left:282.7px;top:831.64px;" width="20.3" height="20.3" viewBox="0 0 24 24" fill="none"><g stroke="#e2e9e9" stroke-width="1.5" stroke-linecap="round" stroke-linejoin="round"><path d="M21.1679 8C19.6247 4.46819 16.1006 2 11.9999 2C6.81459 2 2.55104 5.94668 2.04932 11"/><path d="M17 8H21.4C21.7314 8 22 7.73137 22 7.4V3"/><path d="M2.88146 16C4.42458 19.5318 7.94874 22 12.0494 22C17.2347 22 21.4983 18.0533 22 13"/><path d="M7.04932 16H2.64932C2.31795 16 2.04932 16.2686 2.04932 16.6V21"/></g></svg>
<svg style="position:absolute;left:331px;top:833px;" width="18" height="18" viewBox="0 0 18 18" fill="none"><rect x="0" y="0" width="18" height="18" rx="2.5" fill="#0a939f"/><path d="M3.6 9.2 L7.2 12.6 L14.4 5.4" stroke="#05343d" stroke-width="1.9" stroke-linecap="round" stroke-linejoin="round"/></svg>
<svg style="position:absolute;left:958px;top:830px;" width="12" height="16" viewBox="0 0 12 16" fill="none"><path d="M8.6 3.6 L4.4 8 L8.6 12.4" stroke="#5f8c91" stroke-width="1.4" stroke-linecap="round" stroke-linejoin="round"/></svg>
<div style="position:absolute;left:975.80px;top:830.40px;font-size:15px;line-height:15px;font-weight:700;color:#5f8c91;letter-spacing:-0.897px;white-space:pre;will-change:transform;">Previous</div>
<div style="position:absolute;left:1060.70px;top:830.40px;font-size:15px;line-height:15px;font-weight:400;color:#d3dfdf;letter-spacing:-1.005px;white-space:pre;will-change:transform;">1 of 1</div>
<div style="position:absolute;left:1119.60px;top:830.40px;font-size:15px;line-height:15px;font-weight:700;color:#5f8c91;letter-spacing:-0.404px;white-space:pre;will-change:transform;">Next</div>
<svg style="position:absolute;left:1156px;top:830px;" width="12" height="16" viewBox="0 0 12 16" fill="none"><path d="M4 3.6 L8.2 8 L4 12.4" stroke="#5f8c91" stroke-width="1.4" stroke-linecap="round" stroke-linejoin="round"/></svg>
<div style="position:absolute;left:275px;top:879px;width:521px;height:47px;background:#07444e;border-bottom:1px solid #0b6c76;box-sizing:border-box;height:48px;"></div>
<div style="position:absolute;left:287.30px;top:894.96px;font-size:16px;line-height:16px;font-weight:400;color:#6c9297;letter-spacing:-0.115px;white-space:pre;will-change:transform;">Search...</div>
<svg style="position:absolute;left:765px;top:892px;" width="20" height="20" viewBox="0 0 20 20" fill="none"><g stroke="#eef3f3" stroke-width="1.5" stroke-linecap="round"><circle cx="9.6" cy="9.2" r="6.1"/><path d="M14 13.6 L18.2 17.8"/></g></svg>
<div style="position:absolute;left:1079px;top:879px;width:104px;height:37px;background:transparent;border:1px solid #0c6671;border-radius:4px;box-sizing:border-box;"></div>
<svg style="position:absolute;left:1090px;top:889px;" width="20" height="18" viewBox="0 0 20 18" fill="none"><path d="M2.6 1.8 H17.4 V3.4 L11.6 9.6 V15.4 C11.6 16.4 10.6 17 9.8 16.6 L9 16.2 C8.6 16 8.4 15.6 8.4 15.2 V9.6 L2.6 3.4 Z" stroke="#e3eaea" stroke-width="1.4" stroke-linejoin="round"/></svg>
<div style="position:absolute;left:1118.00px;top:889.40px;font-size:15px;line-height:15px;font-weight:700;color:#e3eaea;letter-spacing:-0.515px;white-space:pre;will-change:transform;">Filter</div>
<svg style="position:absolute;left:1157px;top:895px;" width="14" height="10" viewBox="0 0 14 10" fill="none"><path d="M3.2 3.4 L7 7.2 L10.8 3.4" stroke="#e3eaea" stroke-width="1.2" stroke-linecap="round" stroke-linejoin="round"/></svg>
<div style="position:absolute;left:275px;top:943px;width:138.7px;height:32px;background:#0a939f;border-radius:16px;"></div>
<div style="position:absolute;left:287.30px;top:951.57px;font-size:13.5px;line-height:13.5px;font-weight:400;color:#eaf5f6;letter-spacing:0.062px;white-space:pre;will-change:transform;">si-overlapped-1</div>
<svg style="position:absolute;left:388.7px;top:950px;" width="18" height="18" viewBox="0 0 18 18" fill="none"><circle cx="9" cy="9" r="9" fill="#d6edf0"/><path d="M5.6 5.6 L12.4 12.4 M12.4 5.6 L5.6 12.4" stroke="#0a939f" stroke-width="1.8" stroke-linecap="round"/></svg>
<div style="position:absolute;left:275px;top:1030px;width:908px;height:92px;background:#022b34;border:2px solid #0a939f;border-radius:8px;box-sizing:border-box;"></div>
<svg style="position:absolute;left:290px;top:1059px;" width="12" height="12" viewBox="0 0 12 12" fill="none"><circle cx="6" cy="6" r="6" fill="#4caf50"/></svg>
<div style="position:absolute;left:308.30px;top:1055.61px;font-size:17px;line-height:17px;font-weight:400;color:#dce5e5;letter-spacing:-0.306px;white-space:pre;will-change:transform;">si-overlapped-1</div>
<div style="position:absolute;left:427px;top:1054px;width:42.60000000000002px;height:21.700000000000045px;background:#2f4547;border-radius:5px;"></div>
<div style="position:absolute;left:434.50px;top:1059.84px;font-size:12px;line-height:12px;font-weight:400;color:#d7dfdf;letter-spacing:0.328px;white-space:pre;will-change:transform;">KVM</div>
<div style="position:absolute;left:290.00px;top:1083.40px;font-size:13px;line-height:13px;font-weight:400;color:#aab8b9;letter-spacing:0.266px;white-space:pre;will-change:transform;">#0</div>
<div style="position:absolute;left:317.90px;top:1083.40px;font-size:13px;line-height:13px;font-weight:400;color:#aab8b9;letter-spacing:-0.236px;white-space:pre;will-change:transform;">Compute</div>
<svg style="position:absolute;left:381.12px;top:1080.62px;" width="20.06" height="20.06" viewBox="0 0 24 24" fill="none"><g stroke="#aab8b9" stroke-width="1.45" stroke-linecap="round" stroke-linejoin="round"><rect x="3" y="3" width="18" height="6.7" rx="1.6"/><rect x="3" y="14.3" width="18" height="6.7" rx="1.6"/><path d="M6.2 6.35 H6.3 M6.2 17.65 H6.3"/></g></svg>
<div style="position:absolute;left:406.20px;top:1083.40px;font-size:13px;line-height:13px;font-weight:400;color:#aab8b9;letter-spacing:-0.135px;white-space:pre;will-change:transform;">default</div>
<svg style="position:absolute;left:457.09px;top:1080.76px;" width="17.52" height="17.52" viewBox="0 0 24 24" fill="none"><g stroke="#aab8b9" stroke-width="1.6" stroke-linecap="round" stroke-linejoin="round"><rect x="2" y="3" width="20" height="14" rx="1"/><path d="M8 21.2 H16"/></g></svg>
<div style="position:absolute;left:480.30px;top:1083.40px;font-size:13px;line-height:13px;font-weight:400;color:#aab8b9;letter-spacing:-0.819px;white-space:pre;will-change:transform;">1 / 1</div>
<div style="position:absolute;left:1064.60px;top:1048.00px;font-size:15px;line-height:15px;font-weight:400;color:#dce5e5;letter-spacing:-0.250px;white-space:pre;will-change:transform;">100 / 3200 (3%)</div>
<div style="position:absolute;left:949px;top:1068px;width:218.60px;height:8px;background:#474747;border-radius:4px;overflow:hidden;"><div style="width:6.56px;height:8px;background:#0cb6c8;border-radius:4px;"></div></div>
<div style="position:absolute;left:1037.00px;top:1080.10px;font-size:15px;line-height:15px;font-weight:400;color:#dce5e5;letter-spacing:-0.630px;white-space:pre;will-change:transform;">768 MB / 53 GB (1%)</div>
<div style="position:absolute;left:949px;top:1100px;width:218.60px;height:8px;background:#474747;border-radius:4px;overflow:hidden;"><div style="width:2.19px;height:8px;background:#0cb6c8;border-radius:4px;"></div></div>
<div style="position:absolute;left:280.30px;top:1134.76px;font-size:18px;line-height:18px;font-weight:400;color:#d9e2e2;letter-spacing:0.431px;white-space:pre;will-change:transform;">Select virtual networks</div>
<div style="position:absolute;left:271px;top:1159px;width:916px;height:2px;background:#0a939f;"></div>
<svg style="position:absolute;left:282.7px;top:1193.64px;" width="20.3" height="20.3" viewBox="0 0 24 24" fill="none"><g stroke="#e2e9e9" stroke-width="1.5" stroke-linecap="round" stroke-linejoin="round"><path d="M21.1679 8C19.6247 4.46819 16.1006 2 11.9999 2C6.81459 2 2.55104 5.94668 2.04932 11"/><path d="M17 8H21.4C21.7314 8 22 7.73137 22 7.4V3"/><path d="M2.88146 16C4.42458 19.5318 7.94874 22 12.0494 22C17.2347 22 21.4983 18.0533 22 13"/><path d="M7.04932 16H2.64932C2.31795 16 2.04932 16.2686 2.04932 16.6V21"/></g></svg>
<svg style="position:absolute;left:331px;top:1195px;" width="18" height="18" viewBox="0 0 18 18" fill="none"><rect x="0" y="0" width="18" height="18" rx="2.5" fill="#0a939f"/><path d="M4.6 9 H13.4" stroke="#05343d" stroke-width="2" stroke-linecap="butt"/></svg>
<svg style="position:absolute;left:958px;top:1192px;" width="12" height="16" viewBox="0 0 12 16" fill="none"><path d="M8.6 3.6 L4.4 8 L8.6 12.4" stroke="#5f8c91" stroke-width="1.4" stroke-linecap="round" stroke-linejoin="round"/></svg>
<div style="position:absolute;left:975.80px;top:1192.40px;font-size:15px;line-height:15px;font-weight:700;color:#5f8c91;letter-spacing:-0.897px;white-space:pre;will-change:transform;">Previous</div>
<div style="position:absolute;left:1060.70px;top:1192.40px;font-size:15px;line-height:15px;font-weight:400;color:#d3dfdf;letter-spacing:-1.005px;white-space:pre;will-change:transform;">1 of 1</div>
<div style="position:absolute;left:1119.60px;top:1192.40px;font-size:15px;line-height:15px;font-weight:700;color:#5f8c91;letter-spacing:-0.404px;white-space:pre;will-change:transform;">Next</div>
<svg style="position:absolute;left:1156px;top:1192px;" width="12" height="16" viewBox="0 0 12 16" fill="none"><path d="M4 3.6 L8.2 8 L4 12.4" stroke="#5f8c91" stroke-width="1.4" stroke-linecap="round" stroke-linejoin="round"/></svg>
<div style="position:absolute;left:275px;top:1241px;width:521px;height:47px;background:#07444e;border-bottom:1px solid #0b6c76;box-sizing:border-box;height:48px;"></div>
<div style="position:absolute;left:287.30px;top:1256.96px;font-size:16px;line-height:16px;font-weight:400;color:#6c9297;letter-spacing:-0.115px;white-space:pre;will-change:transform;">Search...</div>
<svg style="position:absolute;left:765px;top:1254px;" width="20" height="20" viewBox="0 0 20 20" fill="none"><g stroke="#eef3f3" stroke-width="1.5" stroke-linecap="round"><circle cx="9.6" cy="9.2" r="6.1"/><path d="M14 13.6 L18.2 17.8"/></g></svg>
<div style="position:absolute;left:1079px;top:1241px;width:104px;height:37px;background:transparent;border:1px solid #0c6671;border-radius:4px;box-sizing:border-box;"></div>
<svg style="position:absolute;left:1090px;top:1251px;" width="20" height="18" viewBox="0 0 20 18" fill="none"><path d="M2.6 1.8 H17.4 V3.4 L11.6 9.6 V15.4 C11.6 16.4 10.6 17 9.8 16.6 L9 16.2 C8.6 16 8.4 15.6 8.4 15.2 V9.6 L2.6 3.4 Z" stroke="#e3eaea" stroke-width="1.4" stroke-linejoin="round"/></svg>
<div style="position:absolute;left:1118.00px;top:1251.40px;font-size:15px;line-height:15px;font-weight:700;color:#e3eaea;letter-spacing:-0.515px;white-space:pre;will-change:transform;">Filter</div>
<svg style="position:absolute;left:1157px;top:1257px;" width="14" height="10" viewBox="0 0 14 10" fill="none"><path d="M3.2 3.4 L7 7.2 L10.8 3.4" stroke="#e3eaea" stroke-width="1.2" stroke-linecap="round" stroke-linejoin="round"/></svg>
<div style="position:absolute;left:275px;top:1305px;width:111px;height:32px;background:#0a939f;border-radius:16px;"></div>
<div style="position:absolute;left:287.30px;top:1313.57px;font-size:13.5px;line-height:13.5px;font-weight:400;color:#eaf5f6;letter-spacing:-0.377px;white-space:pre;will-change:transform;">VLAN-2011</div>
<svg style="position:absolute;left:361px;top:1312px;" width="18" height="18" viewBox="0 0 18 18" fill="none"><circle cx="9" cy="9" r="9" fill="#d6edf0"/><path d="M5.6 5.6 L12.4 12.4 M12.4 5.6 L5.6 12.4" stroke="#0a939f" stroke-width="1.8" stroke-linecap="round"/></svg>
<div style="position:absolute;left:275px;top:1391.3px;width:908px;height:75.20000000000005px;background:#022b34;border:2px solid #0a939f;border-radius:8px;box-sizing:border-box;"></div>
<svg style="position:absolute;left:290px;top:1412.2px;" width="12" height="12" viewBox="0 0 12 12" fill="none"><circle cx="6" cy="6" r="6" fill="#4caf50"/></svg>
<div style="position:absolute;left:307.90px;top:1408.51px;font-size:17px;line-height:17px;font-weight:400;color:#dce5e5;letter-spacing:-0.771px;white-space:pre;will-change:transform;">VLAN-2011</div>
<div style="position:absolute;left:394.3px;top:1407.2px;width:53.30000000000001px;height:21.5px;background:#2f4547;border-radius:5px;"></div>
<div style="position:absolute;left:401.50px;top:1412.84px;font-size:12px;line-height:12px;font-weight:400;color:#d7dfdf;letter-spacing:-0.062px;white-space:pre;will-change:transform;">802.1Q</div>
<div style="position:absolute;left:290.00px;top:1436.10px;font-size:13px;line-height:13px;font-weight:400;color:#aab8b9;letter-spacing:-0.134px;white-space:pre;will-change:transform;">#2</div>
<svg style="position:absolute;left:316.69px;top:1433.86px;" width="18.72" height="18.72" viewBox="0 0 24 24" fill="none"><g stroke="#aab8b9" stroke-width="1.6" stroke-linecap="round" stroke-linejoin="round"><path d="M5 20V19C5 15.134 8.13401 12 12 12C15.866 12 19 15.134 19 19V20"/><circle cx="12" cy="8" r="4"/></g></svg>
<div style="position:absolute;left:341.10px;top:1436.10px;font-size:13px;line-height:13px;font-weight:400;color:#aab8b9;letter-spacing:-0.304px;white-space:pre;will-change:transform;">admin</div>
<svg style="position:absolute;left:387.01px;top:1434.51px;" width="18.0" height="18.0" viewBox="0 0 24 24" fill="none"><g stroke="#aab8b9" stroke-width="1.6" stroke-linecap="round" stroke-linejoin="round"><path d="M1 20V19C1 15.134 4.13401 12 8 12C11.866 12 15 15.134 15 19V20"/><path d="M13 14C13 11.2386 15.2386 9 18 9C20.7614 9 23 11.2386 23 14V14.5"/><circle cx="8" cy="8" r="4"/><circle cx="18" cy="6" r="3"/></g></svg>
<div style="position:absolute;left:411.80px;top:1436.10px;font-size:13px;line-height:13px;font-weight:400;color:#aab8b9;letter-spacing:-0.251px;white-space:pre;will-change:transform;">oneadmin</div>
<svg style="position:absolute;left:478.12px;top:1433.32px;" width="20.06" height="20.06" viewBox="0 0 24 24" fill="none"><g stroke="#aab8b9" stroke-width="1.45" stroke-linecap="round" stroke-linejoin="round"><rect x="3" y="3" width="18" height="6.7" rx="1.6"/><rect x="3" y="14.3" width="18" height="6.7" rx="1.6"/><path d="M6.2 6.35 H6.3 M6.2 17.65 H6.3"/></g></svg>
<div style="position:absolute;left:504.00px;top:1436.10px;font-size:13px;line-height:13px;font-weight:400;color:#aab8b9;letter-spacing:-1.734px;white-space:pre;will-change:transform;">1</div>
<div style="position:absolute;left:1089.40px;top:1410.30px;font-size:15px;line-height:15px;font-weight:400;color:#dce5e5;letter-spacing:-0.260px;white-space:pre;will-change:transform;">0 / 100 (0%)</div>
<div style="position:absolute;left:949px;top:1430px;width:219.00px;height:8px;background:#474747;border-radius:4px;overflow:hidden;"></div>
<div style="position:absolute;left:275px;top:1483px;width:908px;height:72.40000000000009px;background:#022b34;border:1px solid #1d4248;border-radius:8px;box-sizing:border-box;"></div>
<svg style="position:absolute;left:289px;top:1502.6px;" width="12" height="12" viewBox="0 0 12 12" fill="none"><circle cx="6" cy="6" r="6" fill="#4caf50"/></svg>
<div style="position:absolute;left:307.20px;top:1499.11px;font-size:17px;line-height:17px;font-weight:400;color:#dce5e5;letter-spacing:-0.477px;white-space:pre;will-change:transform;">VLAN-2010</div>
<div style="position:absolute;left:397.5px;top:1498.3px;width:53.30000000000001px;height:21.0px;background:#2f4547;border-radius:5px;"></div>
<div style="position:absolute;left:404.70px;top:1503.44px;font-size:12px;line-height:12px;font-weight:400;color:#d7dfdf;letter-spacing:-0.062px;white-space:pre;will-change:transform;">802.1Q</div>
<div style="position:absolute;left:289.00px;top:1526.50px;font-size:13px;line-height:13px;font-weight:400;color:#aab8b9;letter-spacing:-0.984px;white-space:pre;will-change:transform;">#1</div>
<svg style="position:absolute;left:313.58px;top:1524.26px;" width="18.72" height="18.72" viewBox="0 0 24 24" fill="none"><g stroke="#aab8b9" stroke-width="1.6" stroke-linecap="round" stroke-linejoin="round"><path d="M5 20V19C5 15.134 8.13401 12 12 12C15.866 12 19 15.134 19 19V20"/><circle cx="12" cy="8" r="4"/></g></svg>
<div style="position:absolute;left:337.90px;top:1526.50px;font-size:13px;line-height:13px;font-weight:400;color:#aab8b9;letter-spacing:-0.224px;white-space:pre;will-change:transform;">admin</div>
<svg style="position:absolute;left:384.21px;top:1524.91px;" width="18.0" height="18.0" viewBox="0 0 24 24" fill="none"><g stroke="#aab8b9" stroke-width="1.6" stroke-linecap="round" stroke-linejoin="round"><path d="M1 20V19C1 15.134 4.13401 12 8 12C11.866 12 15 15.134 15 19V20"/><path d="M13 14C13 11.2386 15.2386 9 18 9C20.7614 9 23 11.2386 23 14V14.5"/><circle cx="8" cy="8" r="4"/><circle cx="18" cy="6" r="3"/></g></svg>
<div style="position:absolute;left:408.60px;top:1526.50px;font-size:13px;line-height:13px;font-weight:400;color:#aab8b9;letter-spacing:-0.226px;white-space:pre;will-change:transform;">oneadmin</div>
<svg style="position:absolute;left:474.92px;top:1523.72px;" width="20.06" height="20.06" viewBox="0 0 24 24" fill="none"><g stroke="#aab8b9" stroke-width="1.45" stroke-linecap="round" stroke-linejoin="round"><rect x="3" y="3" width="18" height="6.7" rx="1.6"/><rect x="3" y="14.3" width="18" height="6.7" rx="1.6"/><path d="M6.2 6.35 H6.3 M6.2 17.65 H6.3"/></g></svg>
<div style="position:absolute;left:500.80px;top:1526.50px;font-size:13px;line-height:13px;font-weight:400;color:#aab8b9;letter-spacing:-1.734px;white-space:pre;will-change:transform;">1</div>
<div style="position:absolute;left:1090.10px;top:1501.30px;font-size:15px;line-height:15px;font-weight:400;color:#dce5e5;letter-spacing:-0.260px;white-space:pre;will-change:transform;">0 / 100 (0%)</div>
<div style="position:absolute;left:949px;top:1521px;width:219.70px;height:8px;background:#474747;border-radius:4px;overflow:hidden;"></div>
</body></html>
